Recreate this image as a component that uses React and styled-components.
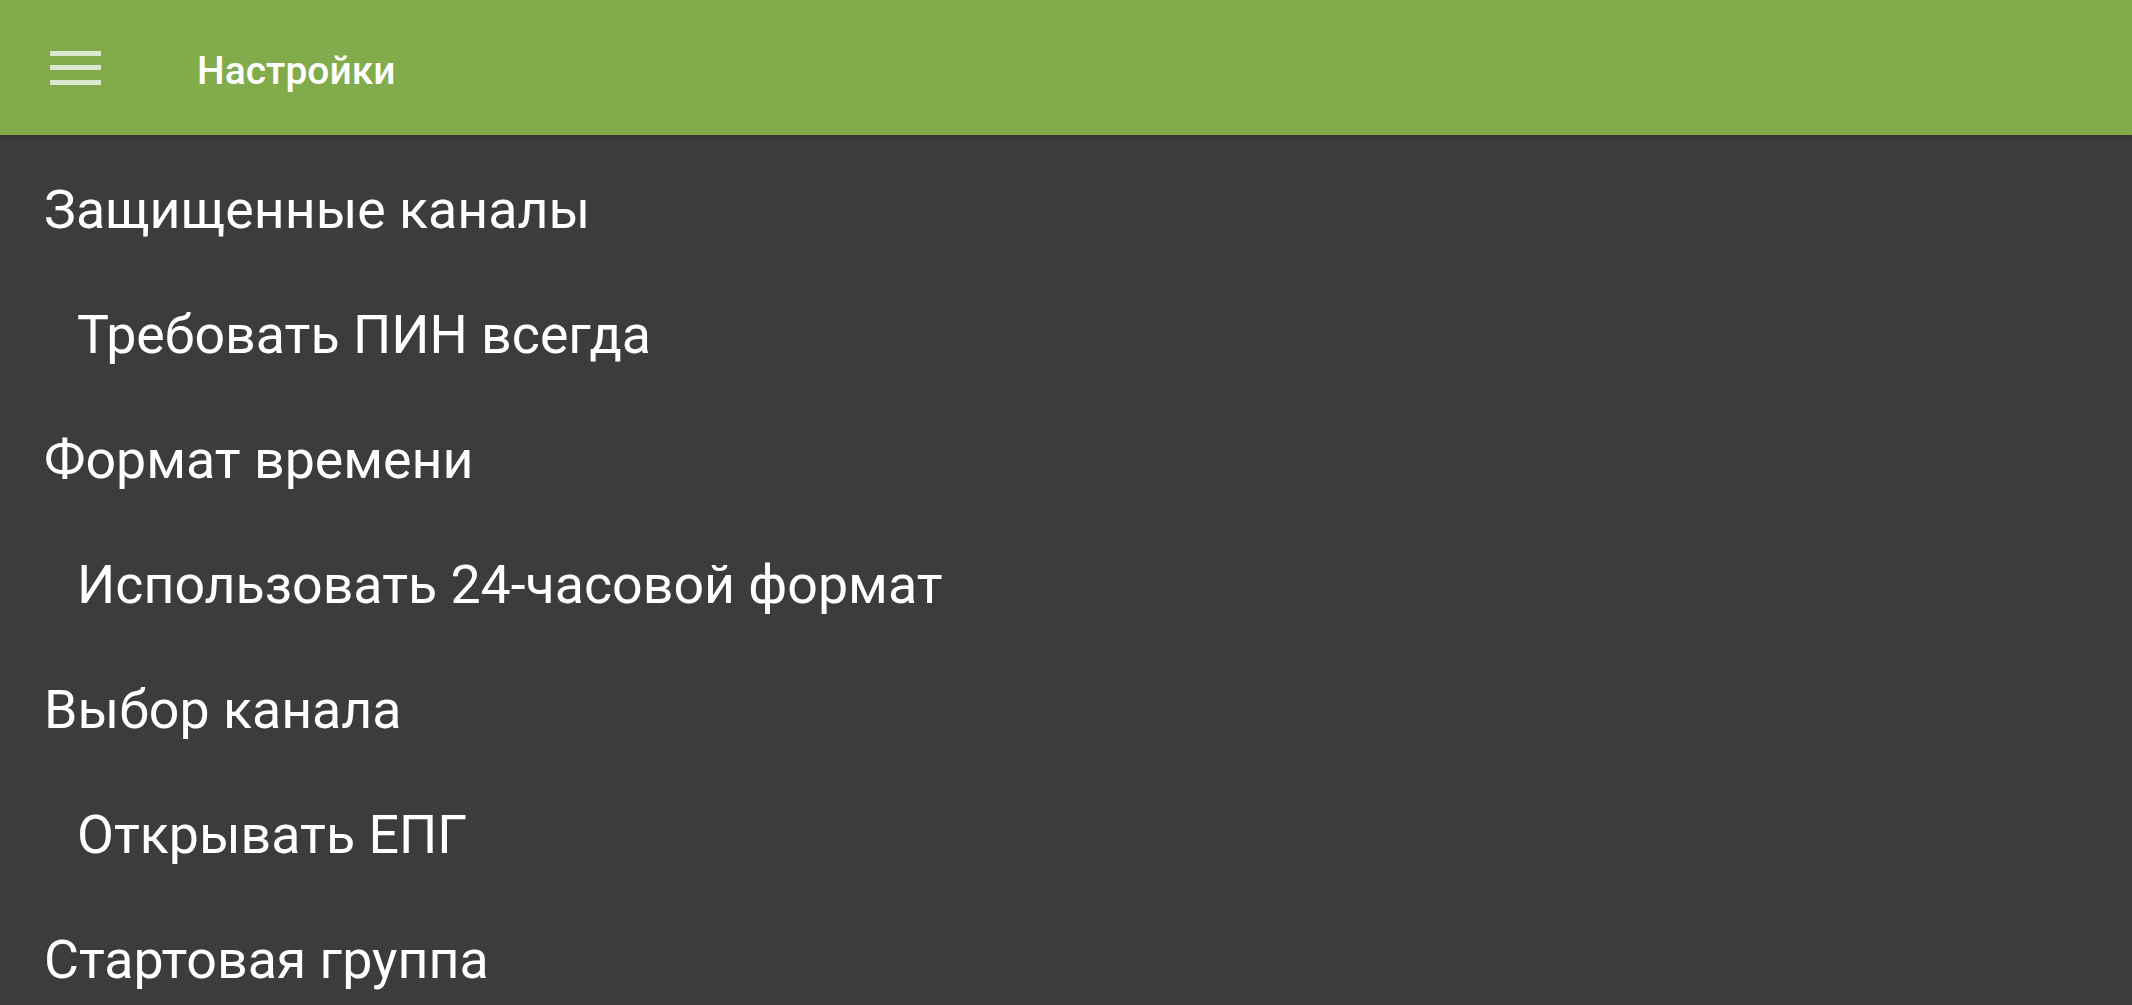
import styled, { createGlobalStyle } from 'styled-components';

const GlobalStyle = createGlobalStyle`
	html,
	body {
		margin: 0;
		padding: 0;
		background: #3c3c3c;
		font-family: Roboto, 'Noto Sans', sans-serif;
	}
`;

const Page = styled.div`
	min-height: 100vh;
	background: #3c3c3c;
	display: flex;
	flex-direction: column;
	overflow: hidden;
`;

const Toolbar = styled.header`
	height: 135px;
	background: #82ab4b;
	display: flex;
	align-items: center;
	padding-left: 50px;
	box-shadow: 0 2px 3px rgba(0, 0, 0, 0.18);
	position: relative;
	z-index: 1;
`;

const MenuButton = styled.div`
	width: 51px;
	display: flex;
	flex-direction: column;
	gap: 9.5px;
	cursor: pointer;
`;

const MenuBar = styled.span`
	display: block;
	height: 5px;
	background: rgba(255, 255, 255, 0.72);
`;

const Title = styled.h1`
	margin: 0 0 0 96px;
	padding-top: 7px;
	color: #fff;
	font-size: 39px;
	font-weight: 500;
	line-height: 1;
`;

const List = styled.div`
	padding-top: 12px;
	display: flex;
	flex-direction: column;
`;

const Row = styled.div`
	height: 125px;
	display: flex;
	align-items: center;
	padding-left: ${(p) => (p.$sub ? '77px' : '44px')};
	color: #fff;
	font-size: 53.7px;
	line-height: 1;
	white-space: nowrap;
	cursor: pointer;
`;

const items = [
	{ label: 'Защищенные каналы' },
	{ label: 'Требовать ПИН всегда', sub: true },
	{ label: 'Формат времени' },
	{ label: 'Использовать 24-часовой формат', sub: true },
	{ label: 'Выбор канала' },
	{ label: 'Открывать ЕПГ', sub: true },
	{ label: 'Стартовая группа' },
];

export default function App() {
	return (
		<>
			<GlobalStyle />
			<Page>
				<Toolbar>
					<MenuButton>
						<MenuBar />
						<MenuBar />
						<MenuBar />
					</MenuButton>
					<Title>Настройки</Title>
				</Toolbar>
				<List>
					{items.map((item) => (
						<Row key={item.label} $sub={item.sub}>
							{item.label}
						</Row>
					))}
				</List>
			</Page>
		</>
	);
}
